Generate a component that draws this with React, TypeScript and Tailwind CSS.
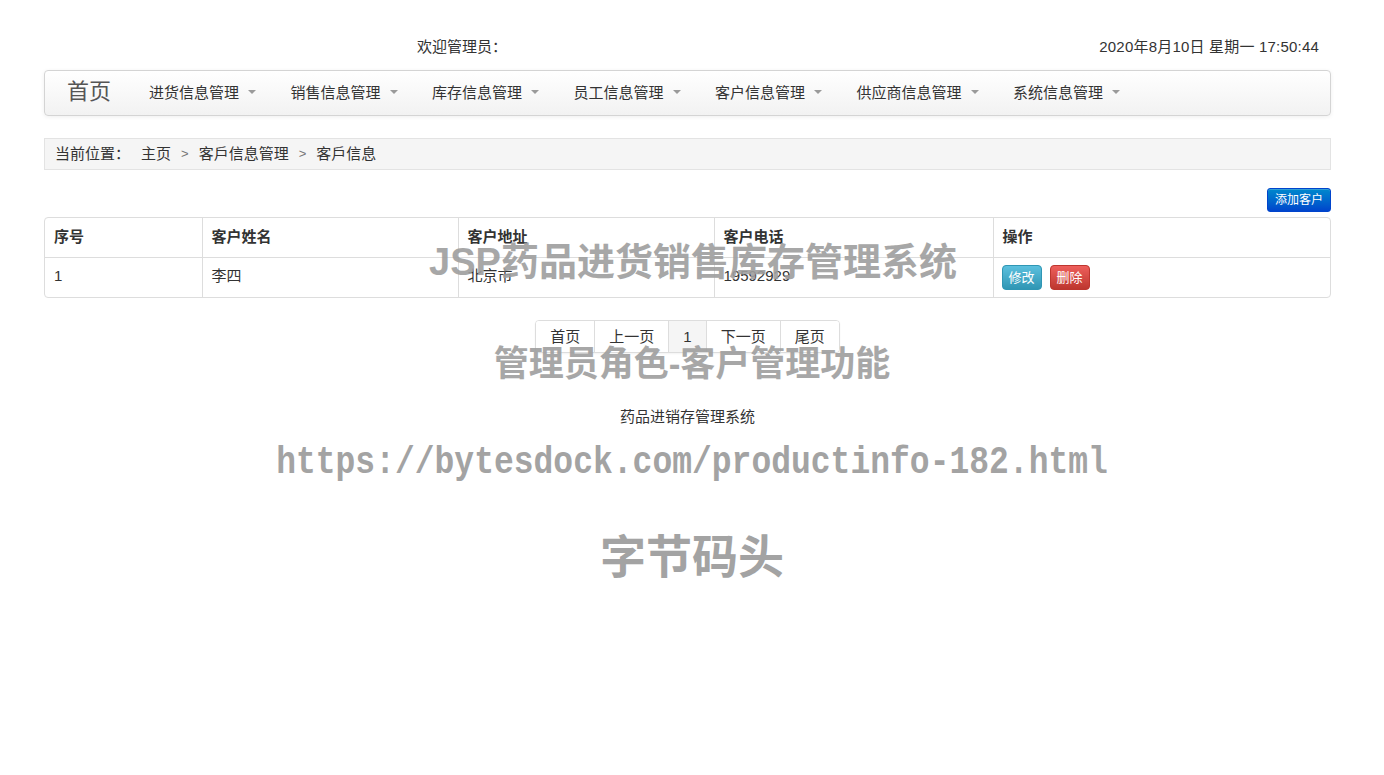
import React from "react";

// menu entries of the top navbar
const menus = [
  "进货信息管理",
  "销售信息管理",
  "库存信息管理",
  "员工信息管理",
  "客户信息管理",
  "供应商信息管理",
  "系统信息管理",
];

const pages = ["首页", "上一页", "1", "下一页", "尾页"];

function Caret() {
  return (
    <span className="ml-[9px] inline-block h-0 w-0 border-x-[4px] border-t-[4px] border-x-transparent border-t-[#9a9a9a] align-middle" />
  );
}

function App() {
  return (
    <div
      className="relative min-h-screen bg-white text-[15px] text-[#333]"
      style={{ fontFamily: '"Liberation Sans", "Noto Sans CJK SC", sans-serif' }}
    >
      <div className="mx-[44px] w-[1287px]">
        {/* top welcome row */}
        <div className="flex pt-[37px] text-[15px] leading-[20px]">
          <div className="w-[643px] pl-[373px]">欢迎管理员：</div>
          <div className="flex-1 pr-[12px] text-right tracking-[0.2px]">2020年8月10日 星期一 17:50:44</div>
        </div>

        {/* navbar */}
        <div className="mt-[13px] flex h-[46px] items-center rounded-[4px] border border-[#d4d4d4] bg-gradient-to-b from-white to-[#f2f2f2] pb-[2px] shadow-[0_1px_4px_rgba(0,0,0,0.065)]">
          <span className="pl-[22px] pr-[21px] text-[22px] leading-none text-[#555]">首页</span>
          {menus.map((m) => (
            <span key={m} className="flex items-center pl-[17px] pr-[17.5px] text-[15px] leading-none text-[#333]">
              {m}
              <Caret />
            </span>
          ))}
        </div>

        {/* breadcrumb */}
        <div className="mt-[22px] flex h-[32px] items-center border border-[#e3e3e3] bg-[#f5f5f5] pl-[10px] text-[15px]">
          <span>当前位置：</span>
          <span className="ml-[11px]">主页</span>
          <span className="mx-[10px] text-[13px] text-[#777]">&gt;</span>
          <span>客戶信息管理</span>
          <span className="mx-[10px] text-[13px] text-[#777]">&gt;</span>
          <span>客戶信息</span>
        </div>

        {/* add button */}
        <div className="mt-[18px] flex justify-end">
          <button className="h-[24px] rounded-[3px] border border-[#04c] bg-gradient-to-b from-[#0088cc] to-[#0044cc] px-[7px] text-[12px] text-white shadow-[inset_0_1px_0_rgba(255,255,255,0.2)]">
            添加客户
          </button>
        </div>

        {/* table */}
        <div className="mt-[5px] overflow-hidden rounded-[4px] border border-[#ddd]">
          <table className="w-full border-collapse text-left">
            <thead>
              <tr className="h-[39px]">
                <th className="w-[157px] pl-[9px] font-bold">序号</th>
                <th className="w-[256px] border-l border-[#ddd] pl-[9px] font-bold">客户姓名</th>
                <th className="w-[256px] border-l border-[#ddd] pl-[9px] font-bold">客户地址</th>
                <th className="w-[279px] border-l border-[#ddd] pl-[9px] font-bold">客户电话</th>
                <th className="border-l border-[#ddd] pl-[9px] font-bold">操作</th>
              </tr>
            </thead>
            <tbody>
              <tr className="h-[40px] border-t border-[#ddd]">
                <td className="pb-[3px] pl-[9px]">1</td>
                <td className="border-l border-[#ddd] pb-[3px] pl-[9px]">李四</td>
                <td className="border-l border-[#ddd] pb-[3px] pl-[9px]">北京市</td>
                <td className="border-l border-[#ddd] pb-[3px] pl-[9px]">19592929</td>
                <td className="border-l border-[#ddd] pl-[8px]">
                  <div className="flex gap-[8px]">
                    <button className="h-[25px] w-[40px] rounded-[4px] border border-[#2f96b4] bg-gradient-to-b from-[#5bc0de] to-[#2f96b4] text-[13px] text-white">
                      修改
                    </button>
                    <button className="h-[25px] w-[40px] rounded-[4px] border border-[#bd362f] bg-gradient-to-b from-[#ee5f5b] to-[#bd362f] text-[13px] text-white">
                      删除
                    </button>
                  </div>
                </td>
              </tr>
            </tbody>
          </table>
        </div>

        {/* pagination */}
        <div className="mt-[22px] flex justify-center">
          <div className="flex overflow-hidden rounded-[4px] border border-[#ddd] shadow-[0_1px_2px_rgba(0,0,0,0.05)]">
            {pages.map((p, i) => (
              <span
                key={p}
                className={
                  "flex h-[31px] items-center px-[14px] text-[15px] leading-none " +
                  (i > 0 ? "border-l border-[#ddd] " : "") +
                  (p === "1" ? "bg-[#f5f5f5] text-[#333]" : "bg-white text-[#333]")
                }
              >
                {p}
              </span>
            ))}
          </div>
        </div>

        {/* footer */}
        <div className="mt-[54px] text-center text-[15px] leading-[20px]">药品进销存管理系统</div>
      </div>

      {/* watermarks */}
      <div className="pointer-events-none absolute inset-x-0 top-[239px] pl-[2px] text-center text-[38px] font-bold leading-[46px] text-[#9e9e9e] opacity-90">
        JSP药品进货销售库存管理系统
      </div>
      <div className="pointer-events-none absolute inset-x-0 top-[342px] text-center text-[35px] font-bold leading-[44px] text-[#9e9e9e] opacity-90">
        管理员角色-客户管理功能
      </div>
      <div
        className="pointer-events-none absolute inset-x-0 top-[440px] scale-y-[1.2] text-center text-[33px] font-bold leading-[46px] text-[#a3a3a3]"
        style={{ fontFamily: '"Liberation Mono", "DejaVu Sans Mono", monospace' }}
      >
        https://bytesdock.com/productinfo-182.html
      </div>
      <div className="pointer-events-none absolute inset-x-0 top-[529px] text-center text-[46px] font-bold leading-[56px] text-[#a3a3a3]">
        字节码头
      </div>
    </div>
  );
}

export default App;
